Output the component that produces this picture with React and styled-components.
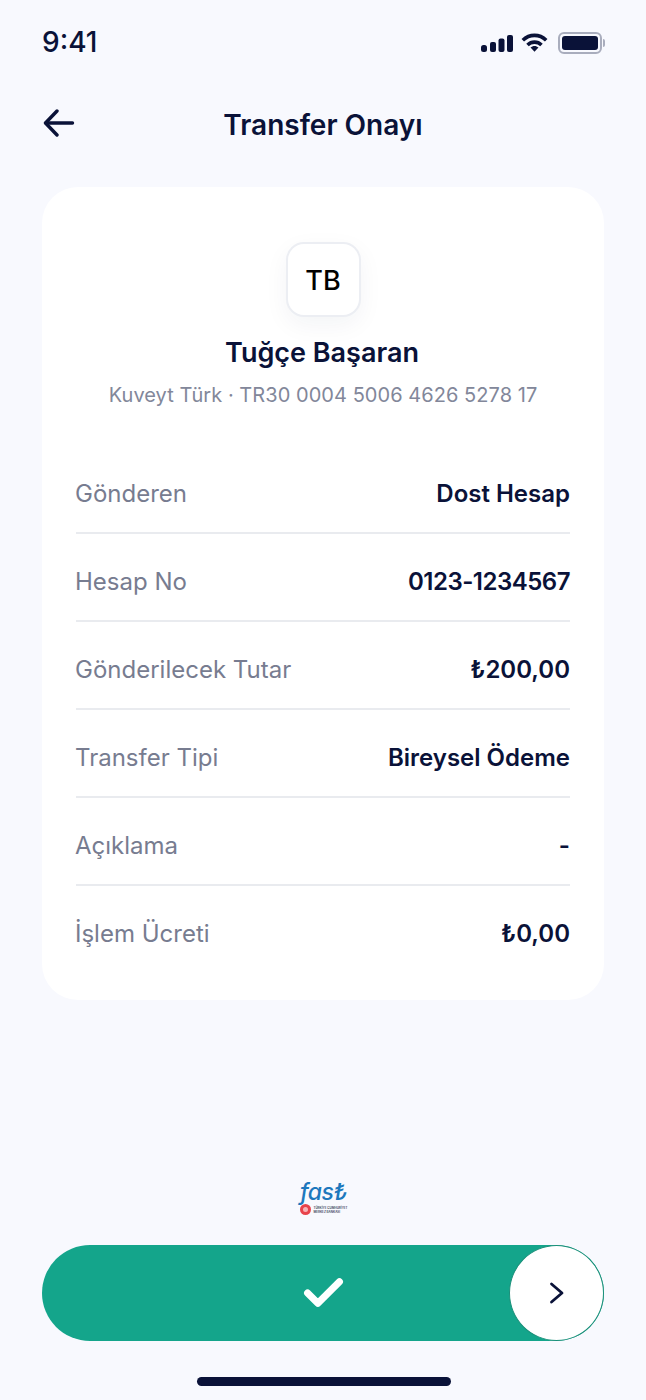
import React from 'react';
import styled, { createGlobalStyle } from 'styled-components';

const GlobalStyle = createGlobalStyle`
  html, body {
    margin: 0;
    padding: 0;
    background: #f8f9fe;
  }
  * {
    box-sizing: border-box;
  }
`;

const rows = [
  { label: 'Gönderen', value: 'Dost Hesap' },
  { label: 'Hesap No', value: '0123-1234567', tight: true },
  { label: 'Gönderilecek Tutar', value: '₺200,00' },
  { label: 'Transfer Tipi', value: 'Bireysel Ödeme' },
  { label: 'Açıklama', value: '-' },
  { label: 'İşlem Ücreti', value: '₺0,00' },
];

const App = () => {
  return (
    <>
      <GlobalStyle />
      <Page>
        <StatusBar>
          <Time>9:41</Time>
          <StatusIcons>
            <svg width="32" height="18" viewBox="0 0 32 18" fill="#0a1238">
              <rect x="0" y="11" width="6" height="7" rx="2.5" />
              <rect x="9" y="8" width="6" height="10" rx="2" />
              <rect x="17.500" y="4.500" width="6" height="13.500" rx="2" />
              <rect x="26" y="1" width="6" height="17" rx="2" />
            </svg>
            <svg width="27" height="20" viewBox="0 0 27 20" fill="none" stroke="#0a1238" strokeWidth="3.600">
              <path d="M1.800 7.200C8.500 0.700 18.500 0.700 25.200 7.200" />
              <path d="M6.500 12C10.500 8.200 16.500 8.200 20.500 12" />
              <path d="M9.500 14.600L13.500 18.800L17.500 14.600C15.200 12.500 11.800 12.500 9.500 14.600Z" fill="#0a1238" stroke="none" />
            </svg>
            <Battery>
              <BatteryFill />
            </Battery>
          </StatusIcons>
        </StatusBar>

        <Header>
          <BackButton>
            <svg width="32" height="28" viewBox="0 0 32 28" fill="none" stroke="#0a1238" strokeWidth="3.400" strokeLinecap="round" strokeLinejoin="round">
              <path d="M29.500 14H3" />
              <path d="M14 2L2.500 14L14 26" />
            </svg>
          </BackButton>
          <Title>Transfer Onayı</Title>
        </Header>

        <Card>
          <Avatar>TB</Avatar>
          <Name>Tuğçe Başaran</Name>
          <Iban>Kuveyt Türk · TR30 0004 5006 4626 5278 17</Iban>
          <Details>
            {rows.map((row) => (
              <Row key={row.label}>
                <Label>{row.label}</Label>
                <Value $tight={row.tight}>{row.value}</Value>
              </Row>
            ))}
          </Details>
        </Card>

        <Spacer />

        <FastLogo>
          <FastWord>fas₺</FastWord>
          <FastBank>
            <svg width="11" height="11" viewBox="0 0 11 11">
              <circle cx="5.500" cy="5.500" r="5.500" fill="#e8434b" />
              <circle cx="5.500" cy="5.500" r="2.500" fill="#f7b3b6" />
            </svg>
            <FastBankName>
              TÜRKİYE CUMHURİYET
              <br />
              MERKEZ BANKASI
            </FastBankName>
          </FastBank>
        </FastLogo>

        <Slider>
          <svg width="41" height="30" viewBox="0 0 42 32" fill="none" stroke="#fff" strokeWidth="7.500" strokeLinecap="round" strokeLinejoin="round">
            <path d="M4 16L15 27L38 4" />
          </svg>
          <Knob>
            <svg width="16" height="22" viewBox="0 0 16 22" fill="none" stroke="#0a1238" strokeWidth="2.800" strokeLinecap="round" strokeLinejoin="round">
              <path d="M2.500 2L13 11L2.500 20" />
            </svg>
          </Knob>
        </Slider>

        <HomeBar />
      </Page>
    </>
  );
};

export default App;

// Styled Components
const Page = styled.div`
  width: 646px;
  height: 1400px;
  padding: 0 42px;
  display: flex;
  flex-direction: column;
  background: #f8f9fe;
  font-family: Inter, "Noto Sans", sans-serif;
  color: #0a1238;
  overflow: hidden;
`;

const StatusBar = styled.div`
  height: 84px;
  display: flex;
  justify-content: space-between;
  align-items: center;
`;

const Time = styled.div`
  font-size: 28px;
  font-weight: 500;
`;

const StatusIcons = styled.div`
  display: flex;
  align-items: center;
  gap: 8px;
  margin-right: 2px;
  padding-top: 2px;
`;

const Battery = styled.div`
  position: relative;
  width: 44px;
  height: 22px;
  border: 2px solid #a9adbd;
  border-radius: 6px;
  padding: 2px;
  margin-left: 2px;

  &::after {
    content: '';
    position: absolute;
    right: -5px;
    top: 5px;
    width: 2px;
    height: 8px;
    border-radius: 0 2px 2px 0;
    background: #a9adbd;
  }
`;

const BatteryFill = styled.div`
  width: 100%;
  height: 100%;
  border-radius: 3px;
  background: #0a1238;
`;

const Header = styled.div`
  position: relative;
  height: 82px;
  display: flex;
  align-items: center;
  justify-content: center;
`;

const BackButton = styled.div`
  position: absolute;
  left: 1px;
  top: 25px;
  display: flex;
`;

const Title = styled.h1`
  margin: 0;
  font-size: 28px;
  font-weight: 600;
`;

const Card = styled.div`
  margin-top: 21px;
  height: 813px;
  padding: 55px 34px 0;
  display: flex;
  flex-direction: column;
  align-items: center;
  background: #fff;
  border-radius: 36px;
`;

const Avatar = styled.div`
  width: 75px;
  height: 75px;
  padding-top: 1px;
  display: flex;
  align-items: center;
  justify-content: center;
  background: #fff;
  border: 2px solid #eceef3;
  border-radius: 18px;
  box-shadow: 0 8px 24px rgba(20, 30, 70, 0.05);
  font-size: 27px;
  font-weight: 500;
  color: #000;
`;

const Name = styled.div`
  margin-top: 18px;
  margin-right: 2px;
  font-size: 27px;
  line-height: 36px;
  font-weight: 600;
`;

const Iban = styled.div`
  margin-top: 11px;
  font-size: 20px;
  line-height: 26px;
  letter-spacing: 0.05px;
  color: #82879a;
`;

const Details = styled.div`
  width: 100%;
  margin-top: 38px;
`;

const Row = styled.div`
  height: 88px;
  padding-top: 8px;
  display: flex;
  justify-content: space-between;
  align-items: center;
  border-bottom: 2px solid #e9ebef;

  &:last-child {
    padding-top: 6px;
    border-bottom: none;
  }
`;

const Label = styled.div`
  margin-left: -1px;
  font-size: 24px;
  color: #777c90;
`;

const Value = styled.div`
  font-size: 24px;
  font-weight: 600;
  letter-spacing: ${(props) => (props.$tight ? '-0.5px' : '0')};
`;

const Spacer = styled.div`
  flex: 1;
`;

const FastLogo = styled.div`
  align-self: center;
  width: 48px;
  margin-bottom: -1px;
  display: flex;
  flex-direction: column;
  align-items: center;
`;

const FastWord = styled.div`
  margin-left: 1px;
  font-size: 23px;
  line-height: 22px;
  font-weight: 500;
  font-style: italic;
  letter-spacing: -0.5px;
  color: #1d78bd;
`;

const FastBank = styled.div`
  display: flex;
  align-items: center;
  gap: 2px;
  margin-top: 1px;
  margin-left: 2px;
`;

const FastBankName = styled.div`
  font-size: 3px;
  line-height: 4px;
  font-weight: 600;
  white-space: nowrap;
  color: #333a55;
`;

const Slider = styled.div`
  position: relative;
  margin-top: 31px;
  height: 96px;
  display: flex;
  align-items: center;
  justify-content: center;
  background: #14a58b;
  border-radius: 48px;
`;

const Knob = styled.div`
  position: absolute;
  right: 0;
  top: 0;
  width: 95px;
  height: 96px;
  display: flex;
  align-items: center;
  justify-content: center;
  background: #fff;
  border: 1.5px solid #1a8f79;
  border-radius: 50%;
`;

const HomeBar = styled.div`
  align-self: center;
  margin-top: 36px;
  margin-bottom: 14px;
  margin-left: 2px;
  width: 254px;
  height: 9px;
  border-radius: 5px;
  background: #0a1238;
`;
